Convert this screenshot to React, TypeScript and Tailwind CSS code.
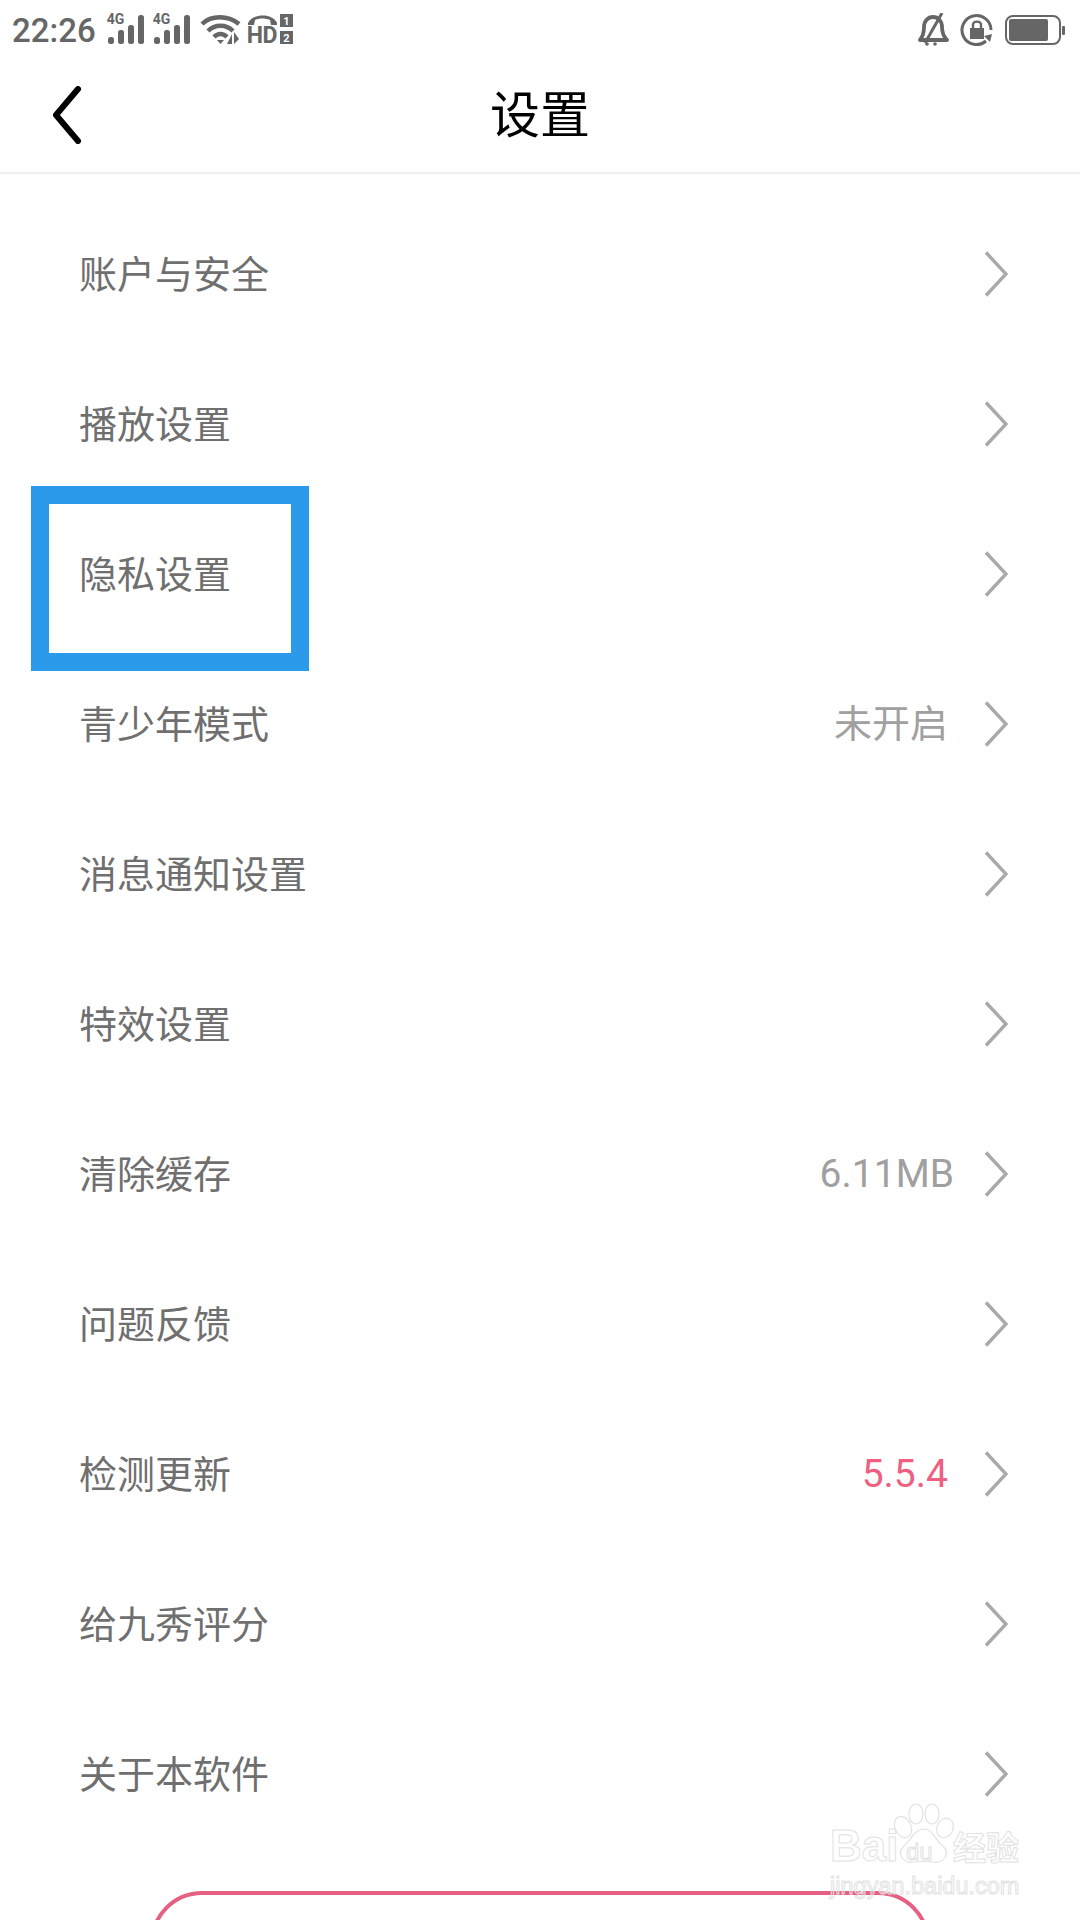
const rows: { label: string; value?: string; tone?: string }[] = [
  { label: "账户与安全" },
  { label: "播放设置" },
  { label: "隐私设置" },
  { label: "青少年模式", value: "未开启", tone: "text-[38px] text-[#a0a0a0]" },
  { label: "消息通知设置" },
  { label: "特效设置" },
  { label: "清除缓存", value: "6.11MB", tone: "text-[39px] text-[#a0a0a0] mr-[-6px]" },
  { label: "问题反馈" },
  { label: "检测更新", value: "5.5.4", tone: "text-[39px] text-[#ef5f82]" },
  { label: "给九秀评分" },
  { label: "关于本软件" },
];

function Signal() {
  return (
    <div className="relative w-[37px] h-[30px]">
      <span className="absolute left-0 top-[-3px] text-[14px] leading-[14px] font-bold text-[#666]">4G</span>
      <svg width="37" height="30" viewBox="0 0 37 30" fill="#666">
        <rect x="1" y="22" width="6" height="7" rx="2.5" />
        <rect x="11" y="15" width="6" height="14" rx="2.5" />
        <rect x="21" y="10" width="6" height="19" rx="2.5" />
        <rect x="31" y="0" width="6" height="29" rx="2.5" />
      </svg>
    </div>
  );
}

function Wifi() {
  return (
    <svg width="44" height="30" viewBox="0 0 44 30" fill="none" stroke="#666" strokeWidth="4.5">
      <path d="M2 9 C11 0 28 0 39 9" />
      <path d="M8 16 C15 9 26 9 33 16" />
      <path d="M14 22 C18 18 23 18 27 22" />
      <path d="M17 25 L20.5 29 L24 25 Z" fill="#666" stroke="none" />
      <path d="M31 29 L31 19 L26 29 Z M33 17 L33 29 L38 24 Z" fill="#666" stroke="none" transform="translate(1 0)" />
    </svg>
  );
}

function HdBadge() {
  return (
    <div className="relative w-[46px] h-[32px]">
      <svg width="46" height="32" viewBox="0 0 46 32" fill="#666">
        <path d="M1 9 C6 -1 26 -1 30 9 L30 11 L24 11 L23 6 C18 4 12 4 8 6 L7 11 L1 11 Z" />
        <rect x="33" y="0" width="13" height="13" />
        <rect x="33" y="17" width="13" height="13" />
        <text x="39.5" y="11" textAnchor="middle" fontSize="11" fontWeight="700" fill="#fff" fontFamily="Roboto">1</text>
        <text x="39.5" y="28" textAnchor="middle" fontSize="11" fontWeight="700" fill="#fff" fontFamily="Roboto">2</text>
      </svg>
      <span className="absolute left-0 top-[11px] text-[23px] leading-[21px] font-bold text-[#666] tracking-[-0.5px]">HD</span>
    </div>
  );
}

function BellOff() {
  return (
    <svg width="32" height="34" viewBox="0 0 32 34" fill="none" stroke="#666" strokeWidth="3.8" strokeLinejoin="round">
      <path d="M3 27 C7 22 7 18 7 14 C7 8 11 4 16 4 C21 4 25 8 25 14 C25 18 26 23 30 27 Z" />
      <path d="M25 0 L8 30" strokeWidth="3" />
      <circle cx="10" cy="31" r="1.8" fill="#666" stroke="none" />
      <circle cx="18" cy="31" r="1.8" fill="#666" stroke="none" />
    </svg>
  );
}

function RotationLock() {
  return (
    <svg width="34" height="34" viewBox="0 0 34 34" fill="none" stroke="#666" strokeWidth="3">
      <path d="M26 28 A14.5 14.5 0 1 1 31 17" />
      <path d="M24 23 L32 21 L30 29 Z" fill="#666" stroke="none" />
      <rect x="10" y="15" width="14" height="11" fill="#666" stroke="none" />
      <path d="M13 15 V12 C13 7.5 21 7.5 21 12 V15" strokeWidth="2.4" />
    </svg>
  );
}

function Battery() {
  return (
    <div className="flex items-center gap-[1px]">
      <div className="w-[56px] h-[30px] rounded-[8px] border-[2.5px] border-[#666] p-[2px] flex">
        <div className="w-[39px] bg-[#666] rounded-[2px]" />
      </div>
      <div className="w-[3px] h-[9px] bg-[#666] rounded-[1px]" />
    </div>
  );
}

function Chevron() {
  return (
    <svg width="24" height="46" viewBox="0 0 24 46" fill="none" stroke="#a9a9a9" strokeWidth="3.4">
      <path d="M2 1.5 L22 23 L2 44.5" />
    </svg>
  );
}

function Row({ label, value, tone }: { label: string; value?: string; tone?: string }) {
  return (
    <div className="h-[150px] pl-[79px] pr-[72px] flex items-center justify-between">
      <span className="text-[38px] pt-[2px] text-[#6f6f6f]">{label}</span>
      <div className="flex items-center gap-[36px]">
        {value && <span className={tone}>{value}</span>}
        <Chevron />
      </div>
    </div>
  );
}

// paw mark plus outlined wordmark in the bottom corner
function Watermark() {
  const outlined = "text-transparent [-webkit-text-stroke:1px_#e2e2e2]";
  return (
    <div className="absolute left-[828px] top-[1802px] w-[196px] h-[96px] font-['Liberation_Sans',sans-serif] pointer-events-none">
      <svg className="absolute left-[65px] top-0" width="62" height="66" viewBox="0 0 62 66" fill="none" stroke="#e2e2e2" strokeWidth="1.2">
        <ellipse cx="10" cy="25" rx="8" ry="11" transform="rotate(-25 10 25)" />
        <ellipse cx="23" cy="12" rx="7" ry="10" />
        <ellipse cx="39" cy="12" rx="7" ry="10" />
        <ellipse cx="52" cy="26" rx="8" ry="10" transform="rotate(25 52 26)" />
        <path d="M31 27 C40 27 42 38 50 44 C58 52 50 62 40 60 C34 59 28 59 22 60 C10 62 3 52 11 44 C18 38 22 27 31 27 Z" />
      </svg>
      <span className={`absolute left-[2px] top-[20px] text-[44px] leading-[48px] font-bold ${outlined}`}>Bai</span>
      <span className={`absolute left-[78px] top-[37px] text-[24px] leading-[26px] ${outlined}`}>du</span>
      <span className={`absolute left-[125px] top-[22px] text-[33px] leading-[44px] font-['Noto_Sans_CJK_SC'] font-bold ${outlined}`}>经验</span>
      <span className={`absolute left-[2px] top-[70px] text-[23.5px] leading-[28px] ${outlined}`}>jingyan.baidu.com</span>
    </div>
  );
}

export default function App() {
  return (
    <div className="relative w-[1080px] h-[1920px] overflow-hidden bg-white font-['Roboto','Noto_Sans_CJK_SC',sans-serif]">
      {/* status bar */}
      <div className="h-[60px] pl-[12px] pr-[15px] flex items-center justify-between">
        <div className="flex items-center">
          <span className="text-[33px] font-medium text-[#666] mr-[11px] leading-none">22:26</span>
          <div className="flex items-center gap-[9px]">
            <Signal />
            <Signal />
          </div>
          <div className="ml-[10px]">
            <Wifi />
          </div>
          <div className="ml-[3px]">
            <HdBadge />
          </div>
        </div>
        <div className="flex items-center gap-[11px]">
          <BellOff />
          <RotationLock />
          <Battery />
        </div>
      </div>

      {/* title bar */}
      <div className="relative h-[114px] border-b-2 border-[#eeeeee] flex items-center justify-center">
        <button className="absolute left-[50px] top-[26px]">
          <svg width="32" height="58" viewBox="0 0 32 58" fill="none" stroke="#000" strokeWidth="6" strokeLinecap="round" strokeLinejoin="round">
            <path d="M28 3 L6 29 L28 55" />
          </svg>
        </button>
        <h1 className="text-[50px] text-black leading-none">设置</h1>
      </div>

      {/* settings list */}
      <div className="pt-[25px]">
        {rows.map((r) => (
          <Row key={r.label} {...r} />
        ))}
      </div>

      {/* logout button, cut off by the page bottom */}
      <div className="mx-[150px] mt-[42px] h-[140px] rounded-[52px] border-[4px] border-[#e66083]" />

      {/* highlight frame around the privacy row */}
      <div className="absolute left-[31px] top-[486px] w-[278px] h-[185px] border-[18px] border-[#2b9aea]" />

      <Watermark />
    </div>
  );
}
